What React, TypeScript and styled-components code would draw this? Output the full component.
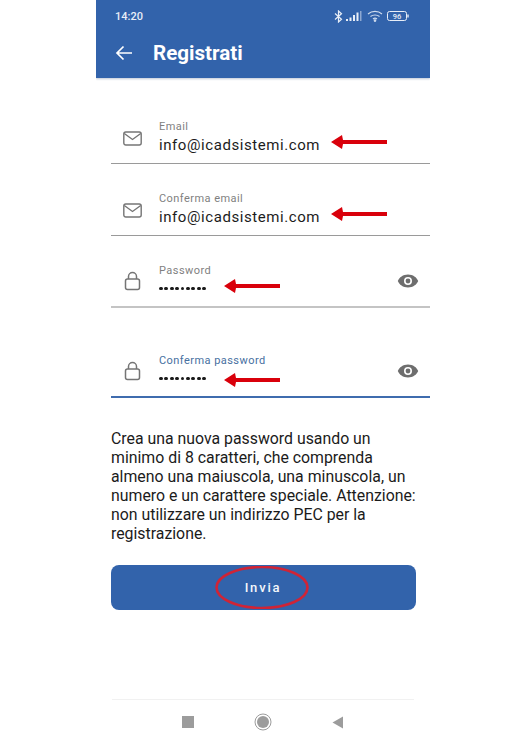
import React from "react";
import styled, { createGlobalStyle } from "styled-components";

const Global = createGlobalStyle`
  html, body { margin: 0; padding: 0; background: #fff; }
  body { font-family: Roboto, "Liberation Sans", sans-serif; }
`;

const Screen = styled.div`
  width: 334px;
  height: 744px;
  margin-left: 96px;
  display: flex;
  flex-direction: column;
  overflow: hidden;
  background: #fff;
`;

const Header = styled.header`
  height: 78px;
  background: #3263ab;
  box-shadow: 0 1px 2px rgba(40, 70, 120, 0.3);
  color: #fff;
  display: flex;
  flex-direction: column;
  flex: none;
`;

const StatusBar = styled.div`
  height: 32px;
  padding: 0 21px 0 19px;
  display: flex;
  align-items: center;
  justify-content: space-between;
  font-size: 11px;
  font-weight: 500;
  color: #e8eef7;
`;

const StatusIcons = styled.div`
  display: flex;
  align-items: center;
  gap: 3px;
`;

const AppBar = styled.div`
  height: 42px;
  padding-left: 19px;
  display: flex;
  align-items: center;
  gap: 20px;
`;

const Title = styled.h1`
  margin: 0;
  font-size: 20.6px;
  font-weight: 700;
  line-height: 1;
`;

const Form = styled.div`
  padding: 32px 0 0 15px;
  display: flex;
  flex-direction: column;
`;

const Field = styled.div<{ $active?: boolean; $gap: number; $thick?: boolean }>`
  position: relative;
  height: ${(p) => (p.$thick ? 51 : 53)}px;
  margin-bottom: ${(p) => p.$gap}px;
  display: flex;
  align-items: center;
  border-bottom: ${(p) => (p.$thick ? 2 : 1)}px solid
    ${(p) => (p.$active ? "#3f6cae" : p.$thick ? "#c4c4c4" : "#9a9a9a")};
`;

const LeadIcon = styled.div<{ $drop: number }>`
  width: 48px;
  flex: none;
  padding-left: 12px;
  box-sizing: border-box;
  display: flex;
  color: #757575;
  margin-top: ${(p) => p.$drop}px;
`;

const Texts = styled.div`
  flex: 1;
  display: flex;
  flex-direction: column;
  margin-top: 1px;
`;

const Label = styled.div<{ $active?: boolean }>`
  font-size: 11px;
  line-height: 13px;
  letter-spacing: 0.45px;
  margin-bottom: 2px;
  color: ${(p) => (p.$active ? "#47709f" : "#7f7f7f")};
`;

const Value = styled.div`
  font-size: 15px;
  line-height: 20px;
  letter-spacing: 0.57px;
  color: #1c1c1c;
`;

const Dots = styled.div`
  height: 20px;
  display: flex;
  align-items: center;
  gap: 1.6px;
`;

const Dot = styled.span`
  width: 3.8px;
  height: 3.8px;
  border-radius: 50%;
  background: #1a1a1a;
`;

const Eye = styled.div`
  width: 22px;
  margin-right: 11px;
  display: flex;
  color: #6e6e6e;
`;

const ArrowMark = styled.svg<{ $left: number; $top: number }>`
  position: absolute;
  left: ${(p) => p.$left}px;
  top: ${(p) => p.$top}px;
`;

const Help = styled.p`
  margin: 32px 0 0 15px;
  white-space: nowrap;
  font-size: 15.85px;
  line-height: 18.9px;
  color: #1b1b1b;
`;

const SendButton = styled.button`
  position: relative;
  margin: 21.6px 0 0 14.5px;
  width: 305px;
  height: 45px;
  flex: none;
  border: 0;
  border-radius: 8px;
  background: #3263ab;
  color: #f4f7fb;
  font-family: inherit;
  font-size: 13px;
  font-weight: 500;
  letter-spacing: 1.8px;
`;

const Ring = styled.svg`
  position: absolute;
  left: 104px;
  top: 1px;
`;

const NavBar = styled.nav`
  margin: auto 16px 0;
  height: 44px;
  flex: none;
  border-top: 1px solid #f1f1f1;
  display: flex;
  align-items: center;
  justify-content: center;
  gap: 60px;
`;

const Arrow = ({ left, top }: { left: number; top: number }) => (
  <ArrowMark $left={left} $top={top} width="57" height="16" viewBox="0 0 57 16">
    <path d="M0 8 L11 1 L12 6 L56 6 L56 10 L12 10 L11 15 Z" fill="#d9000b" />
  </ArrowMark>
);

const Mail = () => (
  <svg width="19" height="17" viewBox="0 0 19 17" fill="none" stroke="currentColor" strokeWidth="1.4">
    <rect x="0.8" y="2" width="17.4" height="13" rx="2" />
    <path d="M1.3 3.5 L9.5 9.5 L17.7 3.5" />
  </svg>
);

const Lock = () => (
  <svg width="20" height="20" viewBox="0 0 20 20" fill="none" stroke="currentColor" strokeWidth="1.5">
    <rect x="2.5" y="8" width="14" height="10.5" rx="2" />
    <path d="M5.5 8 V5.5 a4 4 0 0 1 8 0 V8" />
  </svg>
);

const EyeIcon = () => (
  <svg width="22" height="16" viewBox="0 0 22 16">
    <path
      fillRule="evenodd"
      fill="currentColor"
      d="M11 1.5 C6 1.5 2.3 4.4 0.8 8 C2.3 11.6 6 14.5 11 14.5 C16 14.5 19.7 11.6 21.2 8 C19.7 4.4 16 1.5 11 1.5 Z M11 4 a4 4 0 1 1 0 8 a4 4 0 1 1 0 -8 Z"
    />
    <circle cx="11" cy="8" r="2.4" fill="currentColor" />
  </svg>
);

const Password = () => (
  <Dots>
    {Array.from({ length: 9 }).map((_, i) => (
      <Dot key={i} />
    ))}
  </Dots>
);

export default function App() {
  return (
    <>
      <Global />
      <Screen>
        <Header>
          <StatusBar>
            <span>14:20</span>
            <StatusIcons>
              <svg width="9" height="13" viewBox="0 0 9 13" fill="none" stroke="#e8eef7" strokeWidth="1.2">
                <path d="M1 3.5 L7.5 9.3 L4.5 12 V1 L7.5 3.7 L1 9.5" />
              </svg>
              <svg width="16" height="10" viewBox="0 0 16 10" fill="#e8eef7">
                <rect x="0" y="8" width="2" height="2" />
                <rect x="3.5" y="6.5" width="2" height="3.5" />
                <rect x="7" y="4" width="2" height="6" />
                <rect x="10.5" y="1.5" width="2" height="8.5" />
                <rect x="14" y="0" width="1.5" height="10" opacity="0.5" />
              </svg>
              <svg width="16" height="12" viewBox="0 0 16 12" fill="none" stroke="#cfdcee" strokeWidth="1.1" style={{ marginLeft: 2 }}>
                <path d="M1 4 C5 0.5 11 0.5 15 4" />
                <path d="M3.5 6.5 C6 4.4 10 4.4 12.5 6.5" />
                <path d="M6 9 C7.2 8 8.8 8 10 9" />
                <circle cx="8" cy="10.6" r="0.8" fill="#e8eef7" />
              </svg>
              <svg width="22" height="10" viewBox="0 0 22 10" style={{ marginLeft: 1 }}>
                <rect x="0.5" y="0.5" width="19" height="9" rx="2" fill="none" stroke="#e8eef7" />
                <rect x="20.3" y="3.5" width="1.4" height="3" fill="#e8eef7" />
                <text x="10" y="7.6" textAnchor="middle" fontSize="7.5" fontFamily="Roboto, sans-serif" fill="#e8eef7">
                  96
                </text>
              </svg>
            </StatusIcons>
          </StatusBar>
          <AppBar>
            <svg width="18" height="18" viewBox="0 0 18 18" fill="none" stroke="#fff" strokeWidth="1.7">
              <path d="M17 9 H2 M8.5 2.5 L2 9 L8.5 15.5" />
            </svg>
            <Title>Registrati</Title>
          </AppBar>
        </Header>
        <Form>
          <Field $gap={18}>
            <LeadIcon $drop={4}><Mail /></LeadIcon>
            <Texts>
              <Label>Email</Label>
              <Value>info@icadsistemi.com</Value>
            </Texts>
            <Arrow left={220} top={24} />
          </Field>
          <Field $gap={19}>
            <LeadIcon $drop={4}><Mail /></LeadIcon>
            <Texts>
              <Label>Conferma email</Label>
              <Value>info@icadsistemi.com</Value>
            </Texts>
            <Arrow left={220} top={24} />
          </Field>
          <Field $gap={37} $thick>
            <LeadIcon $drop={0}><Lock /></LeadIcon>
            <Texts>
              <Label>Password</Label>
              <Password />
            </Texts>
            <Eye><EyeIcon /></Eye>
            <Arrow left={113} top={23} />
          </Field>
          <Field $gap={0} $thick $active>
            <LeadIcon $drop={0}><Lock /></LeadIcon>
            <Texts>
              <Label $active>Conferma password</Label>
              <Password />
            </Texts>
            <Eye><EyeIcon /></Eye>
            <Arrow left={113} top={27} />
          </Field>
        </Form>
        <Help>
          Crea una nuova password usando un
          <br />
          minimo di 8 caratteri, che comprenda
          <br />
          almeno una maiuscola, una minuscola, un
          <br />
          numero e un carattere speciale. Attenzione:
          <br />
          non utilizzare un indirizzo PEC per la
          <br />
          registrazione.
        </Help>
        <SendButton>
          Invia
          <Ring width="94" height="43" viewBox="0 0 94 43" fill="none">
            <ellipse cx="47" cy="21.5" rx="45.5" ry="20.5" stroke="#cf2436" strokeWidth="2.6" />
          </Ring>
        </SendButton>
        <NavBar>
          <svg width="12" height="12" viewBox="0 0 12 12"><rect width="12" height="12" fill="#9c9c9c" /></svg>
          <svg width="18" height="18" viewBox="0 0 18 18">
            <circle cx="9" cy="9" r="8" fill="none" stroke="#9c9c9c" strokeWidth="1" />
            <circle cx="9" cy="9" r="6" fill="#9c9c9c" />
          </svg>
          <svg width="12" height="13" viewBox="0 0 12 13"><path d="M0.5 6.5 L11 0.5 V12.5 Z" fill="#9c9c9c" /></svg>
        </NavBar>
      </Screen>
    </>
  );
}
